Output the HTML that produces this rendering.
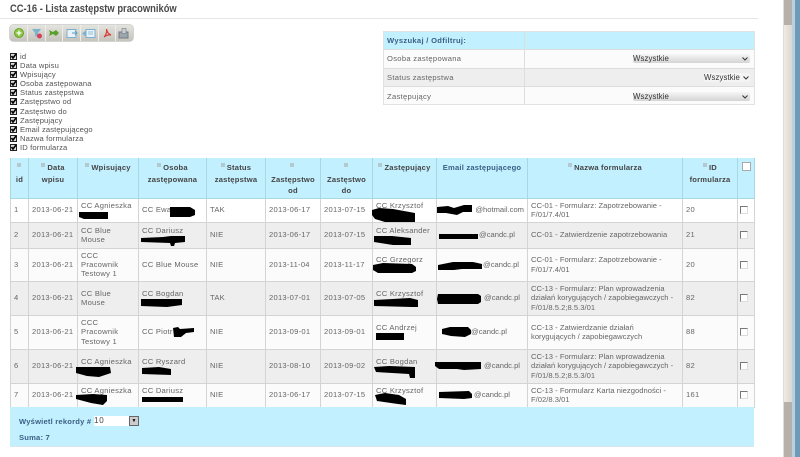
<!DOCTYPE html>
<html><head><meta charset="utf-8">
<style>
html,body{margin:0;padding:0;background:#fff}
body{width:800px;height:457px;overflow:hidden;position:relative;font-family:"Liberation Sans",sans-serif;font-size:7.6px;color:#666;letter-spacing:.2px}
.wrap{position:absolute;left:0;top:0;width:800px;height:457px;filter:blur(.35px)}
.a{position:absolute}
.title{left:10px;top:3px;font-size:10.6px;font-weight:bold;color:#4a4a4a;letter-spacing:0;white-space:nowrap;transform:scaleX(.885);transform-origin:left center}
.rule{left:0;top:18px;width:758px;height:1px;background:#e6e6e6}
.tb{left:10px;top:25px;width:123px;height:16px;background:linear-gradient(#e4e4de,#c4c4bc);border-radius:3px;border:0;box-shadow:0 0 0 .5px #aaa}
.tb i{position:absolute;top:0;width:1px;height:16px;background:#eee}
.cl{left:10px;top:52px}
.cl div{height:9.1px;line-height:9.4px;white-space:nowrap;position:relative;padding-left:10px;color:#555;letter-spacing:.14px}
.cl svg{position:absolute;left:0;top:1px}
.ft{left:383px;top:31px;width:372px;height:74px;border:1px solid #e2e2e2;box-sizing:border-box}
.ft .r{position:absolute;left:0;width:370px;border-bottom:1px solid #ddd;box-sizing:border-box;line-height:18px;padding-left:3px;color:#666;letter-spacing:.3px}
.ft .d{position:absolute;left:140px;top:0;width:1px;height:72px;background:#ddd}
.sel{position:absolute;top:4px;height:9px;line-height:9px;background:linear-gradient(#f6f6f6,#d4d4d4);color:#333;font-size:7.8px;border-radius:2px;letter-spacing:.1px}
.sel svg{position:absolute;right:2px;top:3px}
table{position:absolute;left:10px;top:158px;width:744px;border-collapse:collapse;table-layout:fixed}
th,td{border:1px solid #d4d4d4;padding:0 3px;vertical-align:middle;line-height:9.2px;text-align:left}
th{background:#c3f0ff;font-weight:bold;color:#444;text-align:center;vertical-align:top;padding-top:4px;line-height:11.5px;border-color:#a8d8e4;height:35px;border-top:0}
td{height:auto;letter-spacing:.25px}
td.n{letter-spacing:.02px;padding-right:0}
td.m{letter-spacing:0}
tr.o td{background:#fbfbfb}tr.e td{background:#eeeeee}tr.w td{background:#fff}
.q{display:inline-block;width:4px;height:4px;background:#b4c8d0;margin-right:2px;vertical-align:3px}
td.c{text-align:left;padding:0 0 0 2px}
.cb{display:inline-block;width:6px;height:6px;border:1px solid #777;border-right-color:#ddd;border-bottom-color:#ddd;background:#fff;vertical-align:middle}
.foot{left:10px;top:407px;width:744px;height:40px;background:#c3f0ff;border-bottom:1px solid #d8e8ec;box-sizing:border-box}
.foot div{position:absolute;left:9px;font-weight:bold;color:#3a5f85;white-space:nowrap}
.fsel{position:absolute;left:75px;top:-1px;width:45px;height:10px;background:#fff;font-weight:normal;line-height:10px;color:#444;font-size:8px;letter-spacing:.8px}
.fsel i{position:absolute;right:0;top:0;width:10px;height:10px;background:#ccc;border:1px solid #666;box-sizing:border-box;font-style:normal;text-align:center;font-size:5px;line-height:8px;color:#000;letter-spacing:0}
.sb1{left:783px;top:0;width:9px;height:457px;background:#b6b0a8;border-left:1px solid #ddd;box-sizing:border-box}
.sb2{left:784px;top:25px;width:8px;height:377px;background:linear-gradient(90deg,#eeeae4,#dcd8d0)}
.sb3{left:792px;top:0;width:3px;height:457px;background:#b8d0e0}
.sb4{left:795px;top:0;width:5px;height:457px;background:#6f9ab8}
svg.rd{position:absolute;left:0;top:0}
</style></head><body><div class="wrap">
<div class="a title">CC-16 - Lista zastępstw pracowników</div>
<div class="a rule"></div>
<div class="a tb"><i style="left:17px"></i><i style="left:35px"></i><i style="left:52px"></i><i style="left:70px"></i><i style="left:88px"></i><i style="left:105px"></i>
<svg class="a" style="left:0;top:0" width="123" height="16" viewBox="0 0 123 16">
<circle cx="9" cy="8" r="4.5" fill="#8cc63f" stroke="#5a9a20" stroke-width=".8"/><path d="M9 5.5v5M6.5 8h5" stroke="#fff" stroke-width="1.3"/>
<path d="M22 4h9l-3 4v4l-3-1V8z" fill="#7cb4cc"/><circle cx="29.500" cy="11" r="2.500" fill="#d8405a"/>
<path d="M39 5l4 2 3-2 3 3-3 3-3-2-4 2 1-3z" fill="#5aa02c"/>
<rect x="57" y="4.500" width="9" height="8" fill="#e8f2f8" stroke="#7cb0d0"/><path d="M62 8h5M65 6l2 2-2 2" stroke="#5a9ac0" fill="none"/>
<rect x="76" y="4.500" width="9" height="8" fill="#e8f2f8" stroke="#7cb0d0"/><path d="M72 8.500l4-3v6z" fill="#7cb0d0"/><path d="M78 7h5M78 9h5" stroke="#7cb0d0" stroke-width=".7"/>
<path d="M94 12c2-2 3-5 2.500-8 .5 3 2 5 4.500 6-2-.3-5 .3-7 2z" fill="none" stroke="#d83c3c" stroke-width="1.200"/>
<rect x="109" y="7" width="9" height="6" fill="#9aa8ac" stroke="#778"/><rect x="112" y="3.500" width="4" height="5" fill="#c8d0d4" stroke="#778" stroke-width=".6"/>
</svg></div>

<div class="a cl">
<div><svg width="7" height="7"><rect x=".5" y=".5" width="6" height="6" fill="#ddd" stroke="#222"/><path d="M1.500 3l1.500 2 3-4" stroke="#000" stroke-width="1.600" fill="none"/></svg>id</div>
<div><svg width="7" height="7"><rect x=".5" y=".5" width="6" height="6" fill="#ddd" stroke="#222"/><path d="M1.500 3l1.500 2 3-4" stroke="#000" stroke-width="1.600" fill="none"/></svg>Data wpisu</div>
<div><svg width="7" height="7"><rect x=".5" y=".5" width="6" height="6" fill="#ddd" stroke="#222"/><path d="M1.500 3l1.500 2 3-4" stroke="#000" stroke-width="1.600" fill="none"/></svg>Wpisujący</div>
<div><svg width="7" height="7"><rect x=".5" y=".5" width="6" height="6" fill="#ddd" stroke="#222"/><path d="M1.500 3l1.500 2 3-4" stroke="#000" stroke-width="1.600" fill="none"/></svg>Osoba zastępowana</div>
<div><svg width="7" height="7"><rect x=".5" y=".5" width="6" height="6" fill="#ddd" stroke="#222"/><path d="M1.500 3l1.500 2 3-4" stroke="#000" stroke-width="1.600" fill="none"/></svg>Status zastępstwa</div>
<div><svg width="7" height="7"><rect x=".5" y=".5" width="6" height="6" fill="#ddd" stroke="#222"/><path d="M1.500 3l1.500 2 3-4" stroke="#000" stroke-width="1.600" fill="none"/></svg>Zastępstwo od</div>
<div><svg width="7" height="7"><rect x=".5" y=".5" width="6" height="6" fill="#ddd" stroke="#222"/><path d="M1.500 3l1.500 2 3-4" stroke="#000" stroke-width="1.600" fill="none"/></svg>Zastęstwo do</div>
<div><svg width="7" height="7"><rect x=".5" y=".5" width="6" height="6" fill="#ddd" stroke="#222"/><path d="M1.500 3l1.500 2 3-4" stroke="#000" stroke-width="1.600" fill="none"/></svg>Zastępujący</div>
<div><svg width="7" height="7"><rect x=".5" y=".5" width="6" height="6" fill="#ddd" stroke="#222"/><path d="M1.500 3l1.500 2 3-4" stroke="#000" stroke-width="1.600" fill="none"/></svg>Email zastępującego</div>
<div><svg width="7" height="7"><rect x=".5" y=".5" width="6" height="6" fill="#ddd" stroke="#222"/><path d="M1.500 3l1.500 2 3-4" stroke="#000" stroke-width="1.600" fill="none"/></svg>Nazwa formularza</div>
<div><svg width="7" height="7"><rect x=".5" y=".5" width="6" height="6" fill="#ddd" stroke="#222"/><path d="M1.500 3l1.500 2 3-4" stroke="#000" stroke-width="1.600" fill="none"/></svg>ID formularza</div>
</div>

<div class="a ft">
<div class="r" style="top:0;height:18px;background:#c3f0ff;font-weight:bold;color:#3a5f85">Wyszukaj / Odfiltruj:</div>
<div class="r" style="top:18px;height:19px;background:#fbfbfb">Osoba zastępowana<div class="sel" style="left:249px;width:117px">Wszystkie<svg width="6" height="4"><path d="M.5.5l2.500 2.500 2.500-2.500" stroke="#333" fill="none"/></svg></div></div>
<div class="r" style="top:37px;height:18px;background:#eee">Status zastępstwa<div class="sel" style="left:320px;width:46px;background:#f4f4f4">Wszystkie<svg style="right:1px" width="6" height="4"><path d="M.5.5l2.500 2.500 2.500-2.500" stroke="#333" fill="none"/></svg></div></div>
<div class="r" style="top:55px;height:17px;background:#fbfbfb;border-bottom:0;line-height:19px">Zastępujący<div class="sel" style="left:249px;width:117px;top:5px">Wszystkie<svg width="6" height="4"><path d="M.5.5l2.500 2.500 2.500-2.500" stroke="#333" fill="none"/></svg></div></div>
<div class="d"></div>
</div>

<table>
<colgroup><col style="width:18px"><col style="width:49px"><col style="width:61px"><col style="width:68px"><col style="width:59px"><col style="width:55px"><col style="width:52px"><col style="width:64px"><col style="width:91px"><col style="width:155px"><col style="width:55px"><col style="width:17px"></colgroup>
<tr style="height:40px">
<th><span class="q"></span><br>id</th>
<th><span class="q"></span>Data<br>wpisu</th>
<th><span class="q"></span>Wpisujący</th>
<th><span class="q"></span>Osoba<br>zastępowana</th>
<th><span class="q"></span>Status<br>zastępstwa</th>
<th><span class="q"></span><br>Zastępstwo<br>od</th>
<th><span class="q"></span><br>Zastęstwo<br>do</th>
<th><span class="q"></span>Zastępujący</th>
<th style="color:#3a5f85;padding-left:0;padding-right:0">Email zastępującego</th>
<th><span class="q"></span>Nazwa formularza</th>
<th><span class="q"></span>ID<br>formularza</th>
<th style="padding:2px 0 0"><span class="cb" style="width:7px;height:7px;border-color:#aaa"></span></th>
</tr>
<tr class="w" style="height:24px"><td>1</td><td>2013-06-21</td><td>CC Agnieszka<br>&nbsp;</td><td>CC Ewa</td><td>TAK</td><td>2013-06-17</td><td>2013-07-15</td><td>CC Krzysztof<br>&nbsp;</td><td class="m" style="text-align:right;padding-right:3px">@hotmail.com</td><td class="n">CC-01 - Formularz: Zapotrzebowanie - F/01/7.4/01</td><td>20</td><td class="c"><span class="cb"></span></td></tr>
<tr class="e" style="height:26px"><td>2</td><td>2013-06-21</td><td>CC Blue<br>Mouse</td><td>CC Dariusz<br>&nbsp;</td><td>NIE</td><td>2013-06-17</td><td>2013-07-15</td><td>CC Aleksander<br>&nbsp;</td><td class="m" style="padding-left:42px">@candc.pl</td><td class="n">CC-01 - Zatwierdzenie zapotrzebowania</td><td>21</td><td class="c"><span class="cb"></span></td></tr>
<tr class="o" style="height:33px"><td>3</td><td>2013-06-21</td><td>CCC<br>Pracownik<br>Testowy 1</td><td>CC Blue Mouse</td><td>NIE</td><td>2013-11-04</td><td>2013-11-17</td><td>CC Grzegorz<br>&nbsp;</td><td class="m" style="padding-left:46px">@candc.pl</td><td class="n">CC-01 - Formularz: Zapotrzebowanie - F/01/7.4/01</td><td>20</td><td class="c"><span class="cb"></span></td></tr>
<tr class="e" style="height:34px"><td>4</td><td>2013-06-21</td><td>CC Blue<br>Mouse</td><td>CC Bogdan<br>&nbsp;</td><td>TAK</td><td>2013-07-01</td><td>2013-07-05</td><td>CC Krzysztof<br>&nbsp;</td><td class="m" style="padding-left:47px">@candc.pl</td><td class="n">CC-13 - Formularz: Plan wprowadzenia działań korygujących / zapobiegawczych - F/01/8.5.2;8.5.3/01</td><td>82</td><td class="c"><span class="cb"></span></td></tr>
<tr class="o" style="height:34px"><td>5</td><td>2013-06-21</td><td>CCC<br>Pracownik<br>Testowy 1</td><td>CC Piotr</td><td>NIE</td><td>2013-09-01</td><td>2013-09-01</td><td>CC Andrzej<br>&nbsp;</td><td class="m" style="padding-left:34px">@candc.pl</td><td class="n">CC-13 - Zatwierdzanie działań<br>korygujących / zapobiegawczych</td><td>88</td><td class="c"><span class="cb"></span></td></tr>
<tr class="e" style="height:34px"><td>6</td><td>2013-06-21</td><td>CC Agnieszka<br>&nbsp;</td><td>CC Ryszard<br>&nbsp;</td><td>NIE</td><td>2013-08-10</td><td>2013-09-02</td><td>CC Bogdan<br>&nbsp;</td><td class="m" style="padding-left:47px">@candc.pl</td><td class="n">CC-13 - Formularz: Plan wprowadzenia działań korygujących / zapobiegawczych - F/01/8.5.2;8.5.3/01</td><td>82</td><td class="c"><span class="cb"></span></td></tr>
<tr class="o" style="height:24px"><td>7</td><td>2013-06-21</td><td>CC Agnieszka<br>&nbsp;</td><td>CC Dariusz<br>&nbsp;</td><td>NIE</td><td>2013-06-17</td><td>2013-07-15</td><td>CC Krzysztof<br>&nbsp;</td><td class="m" style="padding-left:37px">@candc.pl</td><td class="n">CC-13 - Formularz Karta niezgodności - F/02/8.3/01</td><td>161</td><td class="c"><span class="cb"></span></td></tr>
</table>

<div class="a foot">
<div style="top:10px">Wyświetl rekordy #<span class="fsel">10<i>▼</i></span></div>
<div style="top:26px">Suma: 7</div>
</div>

<svg class="rd" width="800" height="457" viewBox="0 0 800 457" fill="#000">
<path d="M79 212h29v7H84l-5-2z"/>
<path d="M170 207h20l5 3v5l-5 2h-20z"/>
<path d="M141 238l22-1 8-1 14 0v6l-10 1-1 3-3 0-1-3-29-1z"/>
<path d="M141 299h41v6l-15 2-26-1z"/>
<path d="M76 367l34 0 1 6-12 4-12-1-11-3z"/>
<path d="M173 328l5-1 2 2 14-1v4l-8 1-5 4-7 0z"/>
<path d="M142 368l17-1 12 2v6l-29-1z"/>
<path d="M76 395l17-1 14 1v6l-4 4-12-2-15-4z"/>
<path d="M142 397h41v5h-41z"/>
<path d="M372 210l7-2 14 1 22 4v9h-30l-10-3-3-4z"/>
<path d="M374 236l18 0 19 2v7l-18 0-19-3z"/>
<path d="M373 265l10-2 29 1 4 3v4l-4 2-34 0-5-3z"/>
<path d="M374 300l36-2 8 2v7h-6l-38-1z"/>
<path d="M376 333h28v7h-28z"/>
<path d="M374 367l15-1 26 1v11l-5 0-1-4-33-2z"/>
<path d="M375 395l10-2 14 2 7 4v6l-8-1-21-3z"/>
<path d="M437 207l11-1 6 2 10-3 8 0v7l-9 0-6 3-11-2-9 0z"/>
<path d="M439 234h39v5h-39z"/>
<path d="M438 265l15-3 20 0 9 2v5l-20 0-8 1-16 0z"/>
<path d="M438 294h40l3 2v6l-3 2h-40l-1-5z"/>
<path d="M442 329l8-2 18 0 3 3v4l-6 3-14-1-9-2z"/>
<path d="M435 362h46v7l-17 1-7-1-18 0-4-3z"/>
<path d="M439 392l30-1 3 3v4l-8 1-25-1z"/>
</svg>

<div class="a sb1"></div><div class="a sb2"></div><div class="a sb3"></div><div class="a sb4"></div>
</div></body></html>
